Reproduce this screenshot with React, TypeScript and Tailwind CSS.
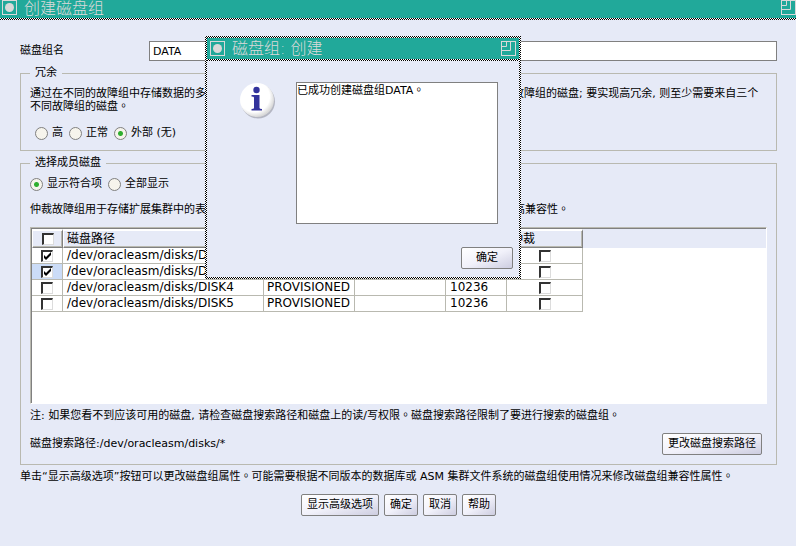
import React from 'react';
import clsx from 'clsx';

const dither = 'bg-[repeating-conic-gradient(#000_0_25%,#fff_0_50%)] bg-[length:2px_2px]';

// centred full stop, the simplified face puts it in the lower left corner
const Stop = () => <span className="font-['Noto_Sans_CJK_TC',sans-serif] leading-none">。</span>;

const TitleBar = ({ title, className }: { title: string; className?: string }) => (
  <header className={clsx('flex shrink-0 bg-[#21a99a] text-[#d9d9d9]', className)}>
    <button aria-label="窗口菜单" className="shrink-0">
      <svg width="15" height="15" viewBox="0 0 15 15" fill="none" className="block">
        <rect x="0.5" y="0.5" width="14" height="14" stroke="currentColor" />
        <circle cx="7.5" cy="7.5" r="4.5" fill="currentColor" />
      </svg>
    </button>
    <h1 className="ml-[7px] grow text-[16px] leading-[18px] font-light whitespace-nowrap">{title}</h1>
    <button aria-label="最大化" className="shrink-0">
      <svg width="15" height="15" viewBox="0 0 15 15" fill="none" stroke="currentColor" className="block">
        <rect x="0.5" y="0.5" width="14" height="14" />
        <path d="M5.5 0V5.5H0M9.5 0V9.5H0" />
      </svg>
    </button>
  </header>
);

const Button = ({ children, className }: { children: React.ReactNode; className?: string }) => (
  <button
    className={clsx(
      'h-[22px] rounded-[2px] border border-[#808080] bg-linear-to-br from-white via-[#f1f1fa] to-[#cdcde0] px-[5px] leading-5 whitespace-nowrap',
      className
    )}
  >
    {children}
  </button>
);

const Radio = ({ name, label, checked }: { name: string; label: string; checked?: boolean }) => (
  <label className="flex items-center gap-1">
    <input
      type="radio"
      name={name}
      defaultChecked={checked}
      className="size-[13px] appearance-none rounded-full border border-[#808080] bg-[#f6f4ec] checked:bg-[radial-gradient(circle,#2fae2f_0_2px,#f6f4ec_3px)]"
    />
    {label}
  </label>
);

const Check = ({ label, checked }: { label: string; checked?: boolean }) => (
  <label className="mx-auto grid w-3">
    <input
      type="checkbox"
      aria-label={label}
      defaultChecked={checked}
      className="peer col-start-1 row-start-1 size-3 appearance-none border-t-2 border-l-2 border-r border-b border-t-[#333] border-l-[#333] border-r-[#dcdcdc] border-b-[#dcdcdc] bg-white"
    />
    <svg viewBox="0 0 12 12" className="pointer-events-none invisible col-start-1 row-start-1 size-3 peer-checked:visible">
      <path d="M3 5V8L5 10L10 5V2L5 7Z" fill="#000" />
    </svg>
  </label>
);

const Group = ({ title, children }: { title: string; children: React.ReactNode }) => (
  <fieldset className="min-w-0 border border-[#b9b9b0] px-[9px]">
    <legend className="px-[5px] leading-4">{title}</legend>
    {children}
  </fieldset>
);

const disks = [
  { path: '/dev/oracleasm/disks/DISK2', checked: true },
  { path: '/dev/oracleasm/disks/DISK3', checked: true, active: true },
  { path: '/dev/oracleasm/disks/DISK4' },
  { path: '/dev/oracleasm/disks/DISK5' },
];

const th = 'border-t-2 border-l border-r border-b border-t-white border-l-white border-r-[#808080] border-b-[#808080] bg-[#e6eaf7] px-[3px] text-left font-normal whitespace-nowrap shadow-[inset_-1px_-1px_#b9b9b0]';
const td = 'border-r border-b border-[#b9b9b0] px-1';

const DiskTable = () => (
  <div className="h-[177px] overflow-hidden border-t border-l border-r border-b border-t-[#b9b9b0] border-l-[#b9b9b0] border-r-white border-b-white">
    <div className="h-full border-t border-l border-[#808080] bg-[linear-gradient(#e6eaf7_19px,#fff_19px)] text-[12px] leading-[15px]">
      <table className="w-[551px] table-fixed border-separate border-spacing-0 bg-white">
        <colgroup>
          <col className="w-[31px]" />
          <col className="w-[201px]" />
          <col className="w-[91px]" />
          <col className="w-[91px]" />
          <col className="w-[61px]" />
          <col className="w-[76px]" />
        </colgroup>
        <thead>
          <tr className="h-[19px]">
            <th className={th}><Check label="全选" /></th>
            <th className={th}>磁盘路径</th>
            <th className={th}>标头状态</th>
            <th className={th}>磁盘名</th>
            <th className={th}>大小</th>
            <th className={th}>仲裁</th>
          </tr>
        </thead>
        <tbody>
          {disks.map((d) => (
            <tr key={d.path} className="h-4">
              <td className={clsx(td, d.active && 'bg-[#cbdcf7]')}><Check label={d.path} checked={d.checked} /></td>
              <td className={td}>{d.path}</td>
              <td className={clsx(td, 'px-[3px]')}>PROVISIONED</td>
              <td className={td}></td>
              <td className={td}>10236</td>
              <td className={td}><Check label={`仲裁 ${d.path}`} /></td>
            </tr>
          ))}
        </tbody>
      </table>
    </div>
  </div>
);

const InfoIcon = () => (
  <svg width="38" height="38" viewBox="0 0 38 38" className="shrink-0">
    <defs>
      <radialGradient id="disc" cx="0.42" cy="0.4" r="0.6">
        <stop offset="0.75" stopColor="#fff" />
        <stop offset="1" stopColor="#d8d8d8" />
      </radialGradient>
    </defs>
    <circle cx="19" cy="19.5" r="17" fill="#b4b6c2" />
    <circle cx="18" cy="18" r="17" fill="url(#disc)" />
    <circle cx="17.5" cy="8" r="3.2" fill="#33339c" />
    <path d="M12.5 13H20.5V26Q20.5 27 23 27V28.5H12.5V27Q15 27 15 26V15.5Q15 14.5 12.5 14.5Z" fill="#33339c" />
  </svg>
);

const ResultDialog = () => (
  <div
    role="dialog"
    aria-label="磁盘组: 创建"
    className={clsx('absolute top-9 left-[205px] flex h-[243px] w-[316px] flex-col p-[2px]', dither)}
  >
    <TitleBar title="磁盘组: 创建" className="h-[21px] items-center px-[3px]" />
    <div className={clsx('h-[2px] shrink-0', dither)} />
    <div className="flex grow flex-col bg-[#e6eaf7] pr-[6px] pb-2 pl-8">
      <div className="mt-[21px] flex items-start">
        <InfoIcon />
        <div className="ml-[19px] h-[142px] w-[202px] border border-[#808080] bg-white leading-4">
          已成功创建磁盘组DATA<Stop />
        </div>
      </div>
      <Button className="mt-auto w-[52px] self-end">确定</Button>
    </div>
  </div>
);

export default function App() {
  return (
    <div className="relative min-h-screen overflow-hidden bg-[#e6eaf7] font-['DejaVu_Sans','Noto_Sans_CJK_SC',sans-serif] text-[11px] text-black">
      <TitleBar title="创建磁盘组" className="h-[18px] items-start pl-[2px]" />
      <div className={clsx('h-[2px]', dither)} />

      <main className="pt-[21px] pr-[19px] pl-5">
        <div className="flex items-center">
          <label htmlFor="group-name" className="w-[129px] shrink-0">磁盘组名</label>
          <input
            id="group-name"
            defaultValue="DATA"
            className="h-5 min-w-0 grow border border-[#808080] bg-white px-[3px]"
          />
        </div>

        <div className="mt-1">
          <Group title="冗余">
            <p className="mt-[6px] leading-[13px]">
              通过在不同的故障组中存储数据的多个副本来提供冗余<Stop />要实现一般冗余, 则需要来自至少 2 个不同故障组的磁盘; 要实现高冗余, 则至少需要来自三个不同故障组的磁盘<Stop />
            </p>
            <div className="mt-3 mb-[9px] ml-[5px] flex gap-[6px] leading-4">
              <Radio name="redundancy" label="高" />
              <Radio name="redundancy" label="正常" />
              <Radio name="redundancy" label="外部 (无)" checked />
            </div>
          </Group>
        </div>

        <div className="mt-1">
          <Group title="选择成员磁盘">
            <div className="mt-[5px] flex gap-[6px] leading-4">
              <Radio name="filter" label="显示符合项" checked />
              <Radio name="filter" label="全部显示" />
            </div>
            <p className="mt-[10px] mb-[9px] leading-4 whitespace-nowrap">
              仲裁故障组用于存储扩展集群中的表决文件, 不包含任何用户数据<Stop />它要求 ASM软件具有 11.2 或更高兼容性<Stop />
            </p>
            <DiskTable />
            <p className="mt-1 leading-4">
              注: 如果您看不到应该可用的磁盘, 请检查磁盘搜索路径和磁盘上的读/写权限<Stop />磁盘搜索路径限制了要进行搜索的磁盘组<Stop />
            </p>
            <div className="mt-[9px] mb-[9px] flex items-center justify-between pr-[5px]">
              <span>磁盘搜索路径:/dev/oracleasm/disks/*</span>
              <Button>更改磁盘搜索路径</Button>
            </div>
          </Group>
        </div>

        <p className="mt-1 leading-4">
          单击“显示高级选项”按钮可以更改磁盘组属性<Stop />可能需要根据不同版本的数据库或 ASM 集群文件系统的磁盘组使用情况来修改磁盘组兼容性属性<Stop />
        </p>
        <div className="mt-[9px] flex justify-center gap-[5px]">
          <Button>显示高级选项</Button>
          <Button>确定</Button>
          <Button>取消</Button>
          <Button>帮助</Button>
        </div>
      </main>

      <ResultDialog />
    </div>
  );
}
